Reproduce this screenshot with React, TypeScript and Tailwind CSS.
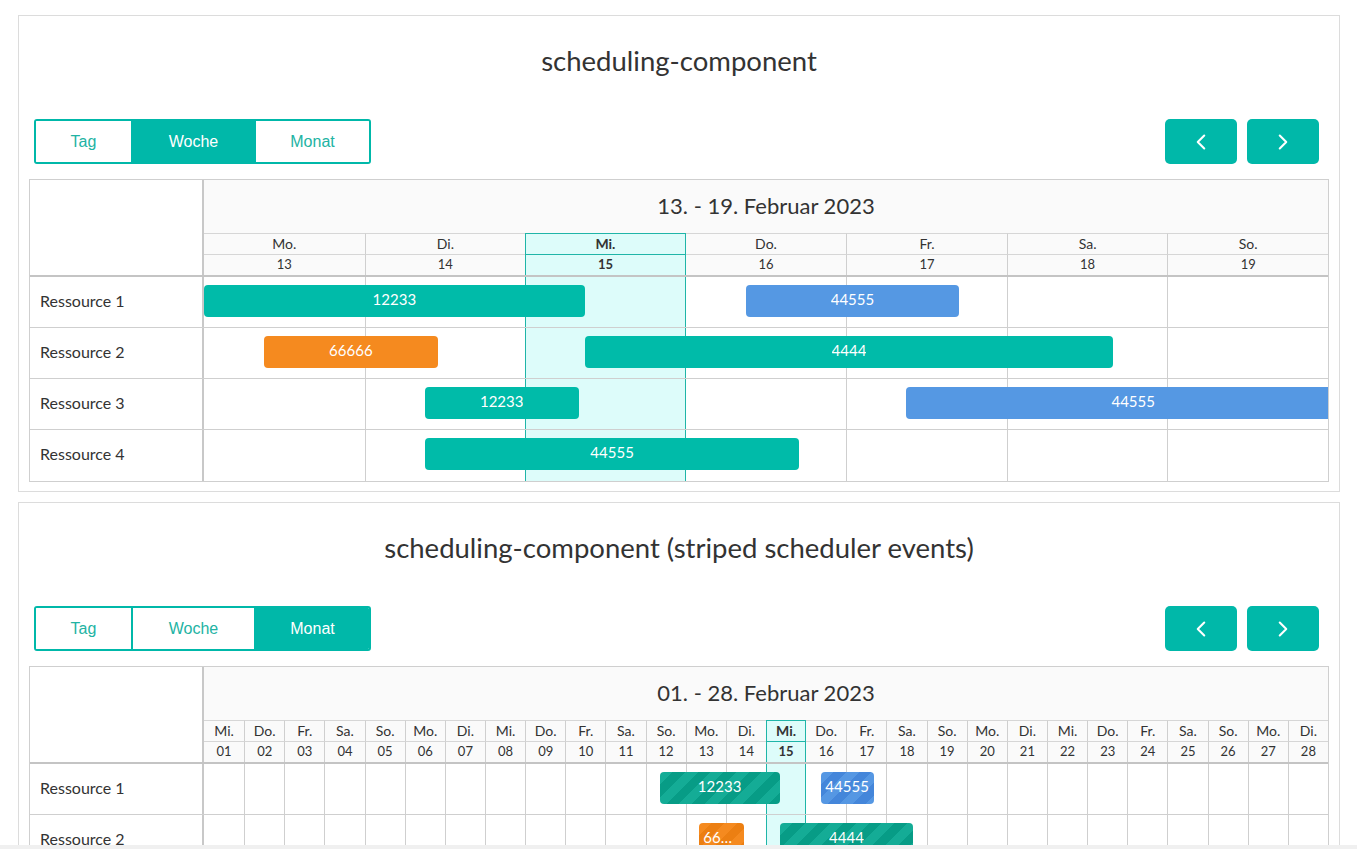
import { ChevronLeft, ChevronRight } from "lucide-react";

type Ev = { label: string; start: number; end: number; color: "teal" | "blue" | "orange" };

const weekDays = [
  { name: "Mo.", date: "13" },
  { name: "Di.", date: "14" },
  { name: "Mi.", date: "15" },
  { name: "Do.", date: "16" },
  { name: "Fr.", date: "17" },
  { name: "Sa.", date: "18" },
  { name: "So.", date: "19" },
];

const names = ["Mo.", "Di.", "Mi.", "Do.", "Fr.", "Sa.", "So."];
// 1. Feb 2023 is a Wednesday
const monthDays = Array.from({ length: 28 }, (_, i) => ({
  name: names[(i + 2) % 7],
  date: String(i + 1).padStart(2, "0"),
}));

const weekRows: { name: string; events: Ev[] }[] = [
  {
    name: "Ressource 1",
    events: [
      { label: "12233", start: 0, end: 2.371, color: "teal" },
      { label: "44555", start: 3.373, end: 4.704, color: "blue" },
    ],
  },
  {
    name: "Ressource 2",
    events: [
      { label: "66666", start: 0.373, end: 1.456, color: "orange" },
      { label: "4444", start: 2.371, end: 5.663, color: "teal" },
    ],
  },
  {
    name: "Ressource 3",
    events: [
      { label: "12233", start: 1.375, end: 2.333, color: "teal" },
      { label: "44555", start: 4.374, end: 7.2, color: "blue" },
    ],
  },
  {
    name: "Ressource 4",
    events: [{ label: "44555", start: 1.375, end: 3.708, color: "teal" }],
  },
];

const monthRows: { name: string; events: Ev[] }[] = [
  {
    name: "Ressource 1",
    events: [
      { label: "12233", start: 11.35, end: 14.34, color: "teal" },
      { label: "44555", start: 15.36, end: 16.68, color: "blue" },
    ],
  },
  {
    name: "Ressource 2",
    events: [
      { label: "66666", start: 12.34, end: 13.44, color: "orange" },
      { label: "4444", start: 14.36, end: 17.65, color: "teal" },
    ],
  },
  { name: "Ressource 3", events: [] },
  { name: "Ressource 4", events: [] },
];

const solid = {
  teal: "bg-[#00bba9]",
  blue: "bg-[#5598e3]",
  orange: "bg-[#f58a1f]",
};

const striped = {
  teal: "bg-[repeating-linear-gradient(135deg,#14ac96_0px,#14ac96_9px,#079c86_9px,#079c86_18px)]",
  blue: "bg-[repeating-linear-gradient(135deg,#5597e3_0px,#5597e3_9px,#4486da_9px,#4486da_18px)]",
  orange: "bg-[repeating-linear-gradient(135deg,#f58a1f_0px,#f58a1f_9px,#ec7f12_9px,#ec7f12_18px)]",
};

function ViewSwitch({ active }: { active: string }) {
  const items = [
    { label: "Tag", w: "w-[95px]" },
    { label: "Woche", w: "w-[123px]" },
    { label: "Monat", w: "w-[115px]" },
  ];
  return (
    <div className="flex h-[45px] overflow-hidden rounded-[3px] border-2 border-[#00b8a9]">
      {items.map((it, i) => (
        <div
          key={it.label}
          className={`flex items-center justify-center text-[16px] ${it.w} ${
            i > 0 ? "border-l-2 border-[#00b8a9]" : ""
          } ${it.label === active ? "bg-[#00b8a9] text-white" : "bg-white text-[#22b3a3]"}`}
          style={{ fontFamily: '"Liberation Sans", Arial, sans-serif' }}
        >
          {it.label}
        </div>
      ))}
    </div>
  );
}

function NavButtons() {
  return (
    <div className="flex gap-[10px]">
      <button className="flex h-[45px] w-[72px] items-center justify-center rounded-[5px] bg-[#00b8a9] text-white">
        <ChevronLeft size={26} strokeWidth={1.9} />
      </button>
      <button className="flex h-[45px] w-[72px] items-center justify-center rounded-[5px] bg-[#00b8a9] text-white">
        <ChevronRight size={26} strokeWidth={1.9} />
      </button>
    </div>
  );
}

function Scheduler({
  title,
  days,
  todayIndex,
  rows,
  isStriped,
  month,
}: {
  title: string;
  days: { name: string; date: string }[];
  todayIndex: number;
  rows: { name: string; events: Ev[] }[];
  isStriped: boolean;
  month: boolean;
}) {
  const n = days.length;
  const cols = month ? "grid-cols-[repeat(28,minmax(0,1fr))]" : "grid-cols-7";

  const cellClass = (i: number) => {
    if (i === todayIndex) return "border-l border-r border-[#1fb5a8] bg-[#ddfcfa]";
    if (i === 0 || i === todayIndex + 1) return "";
    return "border-l border-[#cfcfcf]";
  };

  const headCell = (i: number) =>
    `${cellClass(i)} border-t ${i === todayIndex ? "border-t-[#1fb5a8] font-bold" : "border-t-[#d6d6d6]"}`;

  return (
    <div className="border border-[#cfcfcf] text-[#333]" style={{ fontFamily: "Lato, sans-serif" }}>
      <div className="grid grid-cols-[174px_1fr] border-b-2 border-[#c4c4c4]">
        <div className="border-r-2 border-[#c8c8c8] bg-white" />
        <div className="bg-[#fafafa]">
          <div className="flex h-[53px] items-center justify-center pb-[2px] text-[22px]">{title}</div>
          <div className={`grid ${cols} h-[21px]`}>
            {days.map((d, i) => (
              <div
                key={i}
                className={`flex items-center justify-center pb-[1px] text-[14px] leading-none ${headCell(i)}`}
              >
                {d.name}
              </div>
            ))}
          </div>
          <div className={`grid ${cols} h-[21px]`}>
            {days.map((d, i) => (
              <div
                key={i}
                className={`flex items-center justify-center pb-[1px] text-[13px] leading-none ${headCell(i)}`}
              >
                {d.date}
              </div>
            ))}
          </div>
        </div>
      </div>
      {rows.map((r, ri) => (
        <div
          key={r.name}
          className={`grid h-[51px] grid-cols-[174px_1fr] ${
            ri < rows.length - 1 ? "border-b border-[#cfcfcf]" : ""
          }`}
        >
          <div className="flex items-center border-r-2 border-[#c8c8c8] pb-[3px] pl-[10px] text-[16px]">
            {r.name}
          </div>
          <div className="relative overflow-hidden">
            <div className={`grid h-full ${cols}`}>
              {days.map((_, i) => (
                <div key={i} className={cellClass(i)} />
              ))}
            </div>
            {r.events.map((e) => (
              <div
                key={e.label + e.start}
                className={`absolute top-[8px] flex h-[32px] items-center justify-center rounded-[4px] px-1 pb-[3px] text-[15px] text-white ${
                  isStriped ? striped[e.color] : solid[e.color]
                }`}
                style={{
                  left: `${(e.start / n) * 100}%`,
                  width: `${((e.end - e.start) / n) * 100}%`,
                }}
              >
                <span className="truncate">{e.label}</span>
              </div>
            ))}
          </div>
        </div>
      ))}
    </div>
  );
}

function Card({
  heading,
  active,
  children,
}: {
  heading: string;
  active: string;
  children: React.ReactNode;
}) {
  return (
    <section className="border border-[#dcdcdc] bg-white pb-[9px]">
      <h2
        className="flex h-[94px] items-center justify-center pb-[4px] text-[27.5px] text-[#333]"
        style={{ fontFamily: "Lato, sans-serif" }}
      >
        {heading}
      </h2>
      <div className="mt-[9px] flex items-center justify-between pl-[15px] pr-[20px]">
        <ViewSwitch active={active} />
        <NavButtons />
      </div>
      <div className="mt-[15px] px-[10px]">{children}</div>
    </section>
  );
}

export default function App() {
  return (
    <div className="flex h-[849px] flex-col overflow-hidden bg-white">
      <div className="flex flex-1 flex-col gap-[10px] overflow-hidden pl-[18px] pr-[17px] pt-[15px]">
        <Card heading="scheduling-component" active="Woche">
          <Scheduler
            title="13. - 19. Februar 2023"
            days={weekDays}
            todayIndex={2}
            rows={weekRows}
            isStriped={false}
            month={false}
          />
        </Card>
        <Card heading="scheduling-component (striped scheduler events)" active="Monat">
          <Scheduler
            title="01. - 28. Februar 2023"
            days={monthDays}
            todayIndex={14}
            rows={monthRows}
            isStriped={true}
            month={true}
          />
        </Card>
      </div>
      <div className="h-[4px] bg-[#f0f0f0]" />
    </div>
  );
}
